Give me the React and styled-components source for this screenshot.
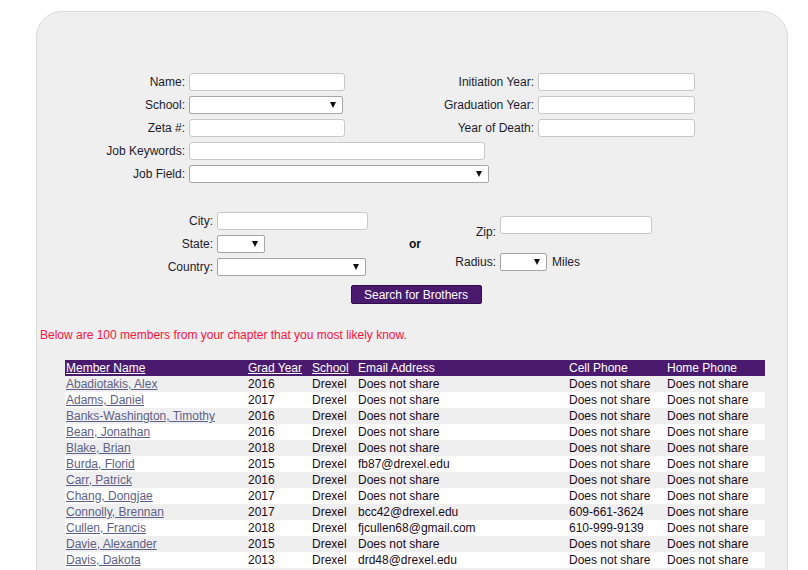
import React from "react";
import styled, { createGlobalStyle } from "styled-components";

const GlobalStyle = createGlobalStyle`
  body {
    margin: 0;
    background: #fff;
    font-family: "Liberation Sans", Arial, sans-serif;
    font-size: 12px;
    color: #1a0a20;
  }
`;

const Panel = styled.div`
  margin: 11px 0 0 36px;
  width: 750px;
  min-height: 640px;
  background: #efefef;
  border: 1px solid #dadada;
  border-radius: 26px;
  padding: 58px 0 40px;
`;

const FormGrid = styled.div`
  display: grid;
  grid-template-columns: 152px 161px 188px 1fr;
  grid-auto-rows: 23px;
  align-items: center;
`;

const Label = styled.label`
  box-sizing: border-box;
  width: ${(p) => (p.$w ? `${p.$w}px` : "auto")};
  text-align: right;
  padding-right: 4px;
  padding-top: ${(p) => p.$top || 0}px;
  line-height: 14px;
  color: #1c1c2c;
  white-space: nowrap;
`;

const TextInput = styled.input`
  box-sizing: border-box;
  display: block;
  width: ${(p) => p.$w}px;
  height: 18px;
  margin: 0;
  padding: 0 3px;
  background: #fff;
  border: 1px solid #c8c8c8;
  border-radius: 3px;
  font: 12px "Liberation Sans", Arial, sans-serif;
  outline: none;
`;

const SelectBox = styled.div`
  box-sizing: border-box;
  display: flex;
  align-items: center;
  justify-content: flex-end;
  width: ${(p) => p.$w}px;
  height: 18px;
  padding-right: 6px;
  background: #fff;
  border: 1px solid #a6a6a6;
  border-radius: 2px;
`;

const Arrow = styled.span`
  width: 0;
  height: 0;
  border-left: 3px solid transparent;
  border-right: 3px solid transparent;
  border-top: 6px solid #111;
`;

const Wide = styled.div`
  grid-column: 2 / span 2;
`;

const LocationRow = styled.div`
  display: flex;
  align-items: center;
  margin-top: 24px;
`;

const CityGrid = styled.div`
  display: grid;
  grid-template-columns: 180px 152px;
  grid-auto-rows: 23px;
  align-items: center;
`;

const OrCell = styled.div`
  box-sizing: border-box;
  width: 84px;
  padding-left: 8px;
  text-align: center;
  font-weight: bold;
  color: #111;
`;

const ZipBlock = styled.div`
  display: flex;
  flex-direction: column;
  gap: 14px;
`;

const ZipRow = styled.div`
  display: flex;
  align-items: ${(p) => (p.$top ? "flex-start" : "center")};
`;

const Miles = styled.span`
  margin-left: 5px;
  color: #1c1c2c;
`;

const ButtonRow = styled.div`
  display: flex;
  justify-content: center;
  padding-left: 8px;
  margin-top: 7px;
`;

const SearchButton = styled.button`
  width: 131px;
  height: 19px;
  padding: 0;
  background: #4a1a6f;
  border: 1px solid #2e0e48;
  border-radius: 2px;
  color: #fff;
  font: 12px "Liberation Sans", Arial, sans-serif;
`;

const Notice = styled.div`
  margin: 24px 0 0 3px;
  line-height: 14px;
  color: #ff1040;
`;

const Table = styled.div`
  margin: 18px 0 0 28px;
  width: 700px;
`;

const Row = styled.div`
  display: grid;
  grid-template-columns: 182px 64px 46px 211px 98px 99px;
  height: 16px;
  line-height: 16px;
  background: ${(p) => (p.$head ? "#4a1a6f" : p.$shade ? "#efefef" : "#fff")};
  color: ${(p) => (p.$head ? "#fff" : "#1a0a20")};
`;

const Cell = styled.div`
  padding-left: 1px;
  white-space: nowrap;
  overflow: hidden;
`;

const Link = styled.a`
  color: ${(p) => (p.$head ? "#fff" : "#5d6088")};
  text-decoration: underline;
  cursor: pointer;
`;

const Select = ({ w }) => (
  <SelectBox $w={w}>
    <Arrow />
  </SelectBox>
);

const NS = "Does not share";

const members = [
  ["Abadiotakis, Alex", "2016", NS, NS, NS],
  ["Adams, Daniel", "2017", NS, NS, NS],
  ["Banks-Washington, Timothy", "2016", NS, NS, NS],
  ["Bean, Jonathan", "2016", NS, NS, NS],
  ["Blake, Brian", "2018", NS, NS, NS],
  ["Burda, Florid", "2015", "fb87@drexel.edu", NS, NS],
  ["Carr, Patrick", "2016", NS, NS, NS],
  ["Chang, Dongjae", "2017", NS, NS, NS],
  ["Connolly, Brennan", "2017", "bcc42@drexel.edu", "609-661-3624", NS],
  ["Cullen, Francis", "2018", "fjcullen68@gmail.com", "610-999-9139", NS],
  ["Davie, Alexander", "2015", NS, NS, NS],
  ["Davis, Dakota", "2013", "drd48@drexel.edu", NS, NS],
];

const App = () => {
  return (
    <>
      <GlobalStyle />
      <Panel>
        <FormGrid>
          <Label>Name:</Label>
          <TextInput $w={156} />
          <Label>Initiation Year:</Label>
          <TextInput $w={157} />

          <Label>School:</Label>
          <Select w={154} />
          <Label>Graduation Year:</Label>
          <TextInput $w={157} />

          <Label>Zeta #:</Label>
          <TextInput $w={156} />
          <Label>Year of Death:</Label>
          <TextInput $w={157} />

          <Label>Job Keywords:</Label>
          <Wide>
            <TextInput $w={296} />
          </Wide>
          <span />

          <Label>Job Field:</Label>
          <Wide>
            <Select w={300} />
          </Wide>
        </FormGrid>

        <LocationRow>
          <CityGrid>
            <Label>City:</Label>
            <TextInput $w={151} />
            <Label>State:</Label>
            <Select w={48} />
            <Label>Country:</Label>
            <Select w={149} />
          </CityGrid>
          <OrCell>or</OrCell>
          <ZipBlock>
            <ZipRow $top>
              <Label $w={47} $top={9}>
                Zip:
              </Label>
              <TextInput $w={152} />
            </ZipRow>
            <ZipRow>
              <Label $w={47}>Radius:</Label>
              <Select w={47} />
              <Miles>Miles</Miles>
            </ZipRow>
          </ZipBlock>
        </LocationRow>

        <ButtonRow>
          <SearchButton>Search for Brothers</SearchButton>
        </ButtonRow>

        <Notice>
          Below are 100 members from your chapter that you most likely know.
        </Notice>

        <Table>
          <Row $head>
            <Cell>
              <Link $head>Member Name</Link>
            </Cell>
            <Cell>
              <Link $head>Grad Year</Link>
            </Cell>
            <Cell>
              <Link $head>School</Link>
            </Cell>
            <Cell>Email Address</Cell>
            <Cell>Cell Phone</Cell>
            <Cell>Home Phone</Cell>
          </Row>
          {members.map((m, i) => (
            <Row key={m[0]} $shade={i % 2 === 0}>
              <Cell>
                <Link>{m[0]}</Link>
              </Cell>
              <Cell>{m[1]}</Cell>
              <Cell>Drexel</Cell>
              <Cell>{m[2]}</Cell>
              <Cell>{m[3]}</Cell>
              <Cell>{m[4]}</Cell>
            </Row>
          ))}
        </Table>
      </Panel>
    </>
  );
};

export default App;
